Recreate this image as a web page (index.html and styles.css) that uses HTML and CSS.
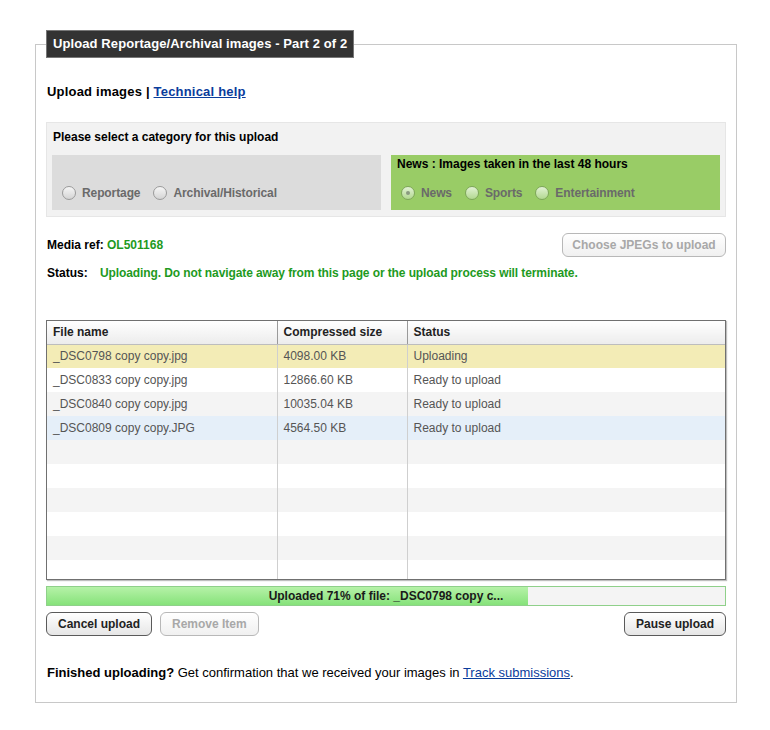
FILE: index.html
```html
<!DOCTYPE html>
<html>
<head>
<meta charset="utf-8">
<link rel="stylesheet" href="styles.css">
</head>
<body>
<div class="page">
  <fieldset class="panel">
    <legend class="panel-title">Upload Reportage/Archival images - Part 2 of 2</legend>

    <div class="tabs"><span class="tab-current">Upload images</span> | <a href="#" class="link">Technical help</a></div>

    <div class="category">
      <div class="category-title">Please select a category for this upload</div>
      <div class="category-groups">
        <div class="group group-gray">
          <div class="radios">
            <label class="radio"><span class="radio-dot"></span>Reportage</label>
            <label class="radio"><span class="radio-dot"></span>Archival/Historical</label>
          </div>
        </div>
        <div class="group group-green">
          <div class="group-title">News : Images taken in the last 48 hours</div>
          <div class="radios">
            <label class="radio"><span class="radio-dot checked"></span>News</label>
            <label class="radio"><span class="radio-dot"></span>Sports</label>
            <label class="radio"><span class="radio-dot"></span>Entertainment</label>
          </div>
        </div>
      </div>
    </div>

    <div class="media-row">
      <div class="media-ref"><span class="label">Media ref:</span> <span class="green">OL501168</span></div>
      <button class="btn btn-disabled btn-choose">Choose JPEGs to upload</button>
    </div>

    <div class="status-row"><span class="label status-label">Status:</span><span class="green status-text">Uploading. Do not navigate away from this page or the upload process will terminate.</span></div>

    <div class="grid">
      <table class="files">
        <thead>
          <tr><th class="c1">File name</th><th class="c2">Compressed size</th><th class="c3">Status</th></tr>
        </thead>
        <tbody>
          <tr class="r-active"><td>_DSC0798 copy copy.jpg</td><td>4098.00 KB</td><td>Uploading</td></tr>
          <tr><td>_DSC0833 copy copy.jpg</td><td>12866.60 KB</td><td>Ready to upload</td></tr>
          <tr class="r-alt"><td>_DSC0840 copy copy.jpg</td><td>10035.04 KB</td><td>Ready to upload</td></tr>
          <tr class="r-hover"><td>_DSC0809 copy copy.JPG</td><td>4564.50 KB</td><td>Ready to upload</td></tr>
          <tr class="r-alt"><td></td><td></td><td></td></tr>
          <tr><td></td><td></td><td></td></tr>
          <tr class="r-alt"><td></td><td></td><td></td></tr>
          <tr><td></td><td></td><td></td></tr>
          <tr class="r-alt"><td></td><td></td><td></td></tr>
          <tr><td></td><td></td><td></td></tr>
        </tbody>
      </table>
    </div>

    <div class="progress">
      <div class="progress-fill" style="width: 71%"></div>
      <div class="progress-text">Uploaded 71% of file: _DSC0798 copy c...</div>
    </div>

    <div class="actions">
      <div class="actions-left">
        <button class="btn">Cancel upload</button>
        <button class="btn btn-disabled">Remove Item</button>
      </div>
      <button class="btn">Pause upload</button>
    </div>

    <p class="footer"><b>Finished uploading?</b> Get confirmation that we received your images in <a href="#" class="link-plain">Track submissions</a>.</p>
  </fieldset>
</div>
</body>
</html>
```

FILE: styles.css
```css
* { box-sizing: border-box; }
html, body { margin: 0; padding: 0; background: #fff; }
body {
  font-family: "Liberation Sans", Arial, sans-serif;
  font-size: 12px;
  color: #000;
}
.page {
  padding: 30px 0 0 35px;
}
.panel {
  width: 702px;
  margin: 0;
  border: 1px solid #c8c8c8;
  padding: 0 10px 21px 10px;
}
.panel-title {
  margin: 0;
  padding: 0 6px 0 6px;
  height: 28px;
  line-height: 26px;
  background: #333;
  border: 1px solid #777;
  color: #fff;
  font-size: 13px;
  font-weight: bold;
  letter-spacing: 0.1px;
}
.tabs {
  margin-top: 26px;
  line-height: 16px;
  font-size: 13px;
  font-weight: bold;
  padding-left: 1px;
  letter-spacing: 0.2px;
}
.link { color: #0a3c9c; text-decoration: underline; }
.link-plain { color: #0a3c9c; text-decoration: underline; }

.category {
  margin-top: 22px;
  background: #f2f2f2;
  border: 1px solid #e6e6e6;
  padding: 6px 5px 6px 5px;
}
.category-title {
  font-weight: bold;
  line-height: 16px;
  padding-left: 1px;
}
.category-groups {
  margin-top: 10px;
  display: flex;
  gap: 10px;
}
.group {
  width: 329px;
  height: 55px;
  display: flex;
  flex-direction: column;
  justify-content: space-between;
  padding: 2px 10px 8px 10px;
}
.group-gray { background: #dcdcdc; justify-content: flex-end; }
.group-green { background: #99cc66; padding-left: 4px; }
.group-green .radios { padding-left: 6px; }
.group-title {
  font-weight: bold;
  line-height: 14px;
  padding-left: 2px;
}
.radios {
  display: flex;
  gap: 13px;
  height: 18px;
  align-items: center;
}
.radio {
  display: flex;
  align-items: center;
  gap: 6px;
  font-weight: bold;
  color: #6a6a6a;
  letter-spacing: -0.1px;
}
.radio-dot {
  width: 14px;
  height: 14px;
  border-radius: 50%;
  border: 1px solid #9a9a9a;
  background: linear-gradient(#f6f6f6, #d4d4d4);
  display: inline-flex;
  align-items: center;
  justify-content: center;
}
.group-green .radio-dot {
  border-color: #7ea65a;
  background: linear-gradient(#e2f2d4, #b2d890);
}
.radio-dot.checked::after {
  content: "";
  width: 4px;
  height: 4px;
  border-radius: 50%;
  background: #8a9a80;
}

.media-row {
  margin-top: 16px;
  height: 24px;
  display: flex;
  align-items: center;
  justify-content: space-between;
}
.media-ref { padding-left: 1px; }
.label { font-weight: bold; }
.green { color: #1e9a1e; font-weight: bold; }
.status-row {
  margin-top: 8px;
  line-height: 16px;
  padding-left: 1px;
}
.status-label { display: inline-block; width: 53px; }
.status-text { letter-spacing: -0.1px; }

.btn {
  font-family: "Liberation Sans", Arial, sans-serif;
  font-size: 12px;
  font-weight: bold;
  height: 24px;
  padding: 0 11px;
  border: 1px solid #5a5a5a;
  border-radius: 6px;
  background: linear-gradient(#ffffff, #e6e6e6);
  color: #222;
  cursor: pointer;
  white-space: nowrap;
}
.btn-disabled {
  border-color: #b8b8b8;
  color: #a8a8a8;
  background: linear-gradient(#ffffff, #f0f0f0);
}
.btn-choose { width: 164px; padding: 0; }

.grid {
  margin-top: 39px;
  height: 260px;
  border: 1px solid #707070;
  box-shadow: 1px 1px 1px rgba(0,0,0,0.25);
  overflow: hidden;
}
.files {
  width: 100%;
  border-collapse: collapse;
  table-layout: fixed;
}
.files th {
  height: 23px;
  text-align: left;
  font-weight: bold;
  color: #222;
  padding: 0 6px;
  background: linear-gradient(#ffffff, #ececec);
  border-bottom: 1px solid #bdbdbd;
  border-left: 1px solid #9a9a9a;
}
.files th:first-child, .files td:first-child { border-left: none; }
.files .c1 { width: 230px; }
.files .c2 { width: 130px; }
.files td {
  height: 24px;
  padding: 0 6px;
  color: #555;
  border-left: 1px solid #cfcfcf;
  white-space: nowrap;
}
.files tr.r-alt td { background: #f4f4f4; }
.files tr.r-active td { background: #f3ecb6; }
.files tr.r-hover td { background: #e5eff9; }

.progress {
  margin-top: 6px;
  height: 20px;
  border: 1px solid #8fd08a;
  background: #f4f4f4;
  position: relative;
}
.progress-fill {
  height: 100%;
  background: linear-gradient(#b6f2a8, #86e27a);
}
.progress-text {
  position: absolute;
  inset: 0;
  text-align: center;
  line-height: 18px;
  font-weight: bold;
  color: #1a1a1a;
}

.actions {
  margin-top: 6px;
  display: flex;
  justify-content: space-between;
}
.actions-left { display: flex; gap: 8px; }

.footer {
  margin: 29px 0 0 1px;
  line-height: 16px;
  font-size: 13px;
}
```
